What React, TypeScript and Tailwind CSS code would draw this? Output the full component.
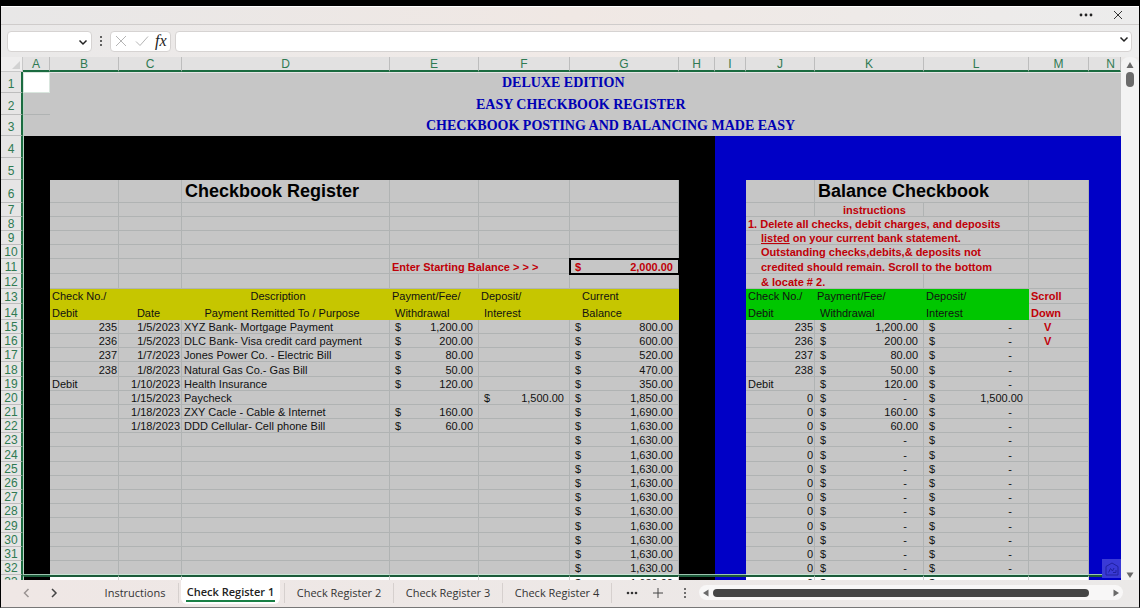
import type { ReactNode } from "react";

const GRID = "border-r border-b border-[#b0b3b3] bg-[#c6c6c6]";
const YELLOW = "bg-[#c6c600]";
const GREEN = "bg-[#00c600]";
const RED = "font-bold text-[#c00008]";

const COLUMNS = [
  { name: "A", width: "w-[27px]" },
  { name: "B", width: "w-[69px]" },
  { name: "C", width: "w-[63px]" },
  { name: "D", width: "" },
  { name: "E", width: "w-[89px]" },
  { name: "F", width: "w-[91px]" },
  { name: "G", width: "w-[109px]" },
  { name: "H", width: "w-[36px]" },
  { name: "I", width: "w-[31px]" },
  { name: "J", width: "w-[69px]" },
  { name: "K", width: "w-[109px]" },
  { name: "L", width: "w-[105px]" },
  { name: "M", width: "w-[60px]" },
  { name: "N", width: "w-[32px]" },
];

type Entry = {
  row: number;
  check?: string;
  date?: string;
  text?: string;
  payment?: string;
  deposit?: string;
  balance: string;
};

const ENTRIES: Entry[] = [
  { row: 15, check: "235", date: "1/5/2023", text: "XYZ Bank- Mortgage Payment", payment: "1,200.00", balance: "800.00" },
  { row: 16, check: "236", date: "1/5/2023", text: "DLC Bank- Visa credit card payment", payment: "200.00", balance: "600.00" },
  { row: 17, check: "237", date: "1/7/2023", text: "Jones Power Co. - Electric Bill", payment: "80.00", balance: "520.00" },
  { row: 18, check: "238", date: "1/8/2023", text: "Natural Gas Co.- Gas Bill", payment: "50.00", balance: "470.00" },
  { row: 19, check: "Debit", date: "1/10/2023", text: "Health Insurance", payment: "120.00", balance: "350.00" },
  { row: 20, date: "1/15/2023", text: "Paycheck", deposit: "1,500.00", balance: "1,850.00" },
  { row: 21, date: "1/18/2023", text: "ZXY Cacle - Cable & Internet", payment: "160.00", balance: "1,690.00" },
  { row: 22, date: "1/18/2023", text: "DDD Cellular- Cell phone Bill", payment: "60.00", balance: "1,630.00" },
  ...Array.from({ length: 11 }, (_, i) => ({ row: 23 + i, balance: "1,630.00" })),
];

const TALL_ROWS = [18, 24, 29];

function Cell({ span, className = "", children }: { span?: number; className?: string; children?: ReactNode }) {
  return (
    <td colSpan={span} className={`p-0 align-bottom whitespace-nowrap ${className}`}>
      {children}
    </td>
  );
}

function Money({ value }: { value?: string }) {
  if (!value) return null;
  return (
    <div className={`flex justify-between pl-[5px] ${value === "-" ? "pr-4" : "pr-[5px]"}`}>
      <span>$</span>
      <span>{value}</span>
    </div>
  );
}

function Row({ n, height, children }: { n: number; height: string; children: ReactNode }) {
  const pad = n <= 6 ? "pb-[2px]" : "";
  return (
    <tr className={height}>
      <th
        scope="row"
        className={`border-r-2 border-b border-r-[#1b6b40] border-b-[#bdbdbd] bg-[#e6e5e5] p-0 align-bottom text-[12px] leading-[12px] font-normal text-[#2f7a52] ${pad}`}
      >
        {n}
      </th>
      {children}
    </tr>
  );
}

const EDGE = "border-l border-[#b9d4c4]";

/* Rows 6 and below share the coloured gutters A, H, I and N. */
function Framed({ n, height, left, right }: { n: number; height: string; left: ReactNode; right: ReactNode }) {
  const line = n === 33 ? "border-t-2 border-t-[#1b5b3a]" : n === 32 ? "border-b border-b-[#9cc4b0]" : "";
  return (
    <Row n={n} height={height}>
      <Cell className={`bg-black ${EDGE} ${line}`} />
      {left}
      <Cell className={`bg-black ${line}`} />
      <Cell className={`bg-[#0000c6] ${line}`} />
      {right}
      <Cell className={`bg-[#0000c6] ${line}`} />
    </Row>
  );
}

function Blank({ count }: { count: number }) {
  return (
    <>
      {Array.from({ length: count }, (_, i) => (
        <Cell key={i} className={GRID} />
      ))}
    </>
  );
}

function Instruction({ children, indent = true }: { children: ReactNode; indent?: boolean }) {
  return (
    <>
      <Cell span={3} className={`${GRID} ${RED} ${indent ? "pl-[15px]" : "pl-[2px]"}`}>
        {children}
      </Cell>
      <Blank count={1} />
    </>
  );
}

function EntryRow({ e }: { e: Entry }) {
  const last = e.row === 33;
  const edge = e.row === 32 ? "border-r border-b border-r-[#b0b3b3] border-b-[#c9e6d6] bg-[#c6c6c6]" : GRID;
  const box = last ? "border-t-2 border-r border-t-[#1b5b3a] border-r-[#d4d4d4] bg-white" : edge;
  const check = e.check ?? "";
  const mirror = e.check ?? "0";
  return (
    <Framed
      n={e.row}
      height={TALL_ROWS.includes(e.row) ? "h-[15px]" : "h-[14px]"}
      left={
        <>
          <Cell className={`${box} ${check === "Debit" ? "pl-[2px]" : "pr-px text-right"}`}>{check}</Cell>
          <Cell className={`${box} pr-px text-right`}>{e.date}</Cell>
          <Cell className={`${box} pl-[2px]`}>{e.text}</Cell>
          <Cell className={box}><Money value={e.payment} /></Cell>
          <Cell className={box}><Money value={e.deposit} /></Cell>
          <Cell className={box}><Money value={e.balance} /></Cell>
        </>
      }
      right={
        <>
          <Cell className={`${box} ${mirror === "Debit" ? "pl-[2px]" : "pr-px text-right"}`}>{mirror}</Cell>
          <Cell className={box}><Money value={e.payment ?? "-"} /></Cell>
          <Cell className={box}><Money value={e.deposit ?? "-"} /></Cell>
          <Cell className={`${box} ${RED} pl-[15px]`}>{e.row === 15 || e.row === 16 ? "V" : ""}</Cell>
        </>
      }
    />
  );
}

const TITLE = "bg-[#c6c6c6] pb-px font-['Liberation_Serif',serif] text-[14px] leading-[18px] font-bold text-[#0000b4]";

function Sheet() {
  return (
    <table className="w-full table-fixed border-separate border-spacing-0 font-['Liberation_Sans',Arial,sans-serif] text-[11px] leading-[12px] text-[#111111]">
      <colgroup>
        <col className="w-[22px]" />
        {COLUMNS.map((c) => (
          <col key={c.name} className={c.width} />
        ))}
      </colgroup>
      <thead>
        <tr className="h-[15px] bg-[#e2e1e1] text-[12px] leading-[12px] text-[#2f7a52]">
          <td className="border-r border-b border-[#c8c8c8] bg-[#efeeee] p-0">
            <svg viewBox="0 0 20 12" className="ml-auto block h-3 w-5" aria-hidden="true">
              <path d="M18 3v8h-8z" fill="#d2d2d2" />
            </svg>
          </td>
          {COLUMNS.map((c) => (
            <th
              key={c.name}
              scope="col"
              className={`border-r border-b-2 border-r-[#bdbdbd] border-b-[#1b6b40] p-0 pt-px align-bottom font-normal ${c.name === "N" ? "pl-3" : ""}`}
            >
              {c.name}
            </th>
          ))}
        </tr>
      </thead>
      <tbody>
        <Row n={1} height="h-[21px]">
          <Cell className="border border-[#d9e6de] bg-white" />
          <Cell span={3} className="border-t border-[#e6e6e6] bg-[#c6c6c6]" />
          <Cell span={10} className={`border-t border-[#e6e6e6] pl-28 ${TITLE}`}>DELUXE EDITION</Cell>
        </Row>
        <Row n={2} height="h-[22px]">
          <Cell className={`border-b bg-[#c6c6c6] ${EDGE} border-b-[#b0b3b3]`} />
          <Cell span={3} className="bg-[#c6c6c6]" />
          <Cell span={10} className={`pl-[86px] ${TITLE}`}>EASY CHECKBOOK REGISTER</Cell>
        </Row>
        <Row n={3} height="h-[21px]">
          <Cell className={`bg-[#c6c6c6] ${EDGE}`} />
          <Cell span={3} className="bg-[#c6c6c6]" />
          <Cell span={10} className={`pl-9 ${TITLE}`}>CHECKBOOK POSTING AND BALANCING MADE EASY</Cell>
        </Row>
        {[4, 5].map((n) => (
          <Row key={n} n={n} height="h-[22px]">
            <Cell span={8} className={`bg-black ${EDGE}`} />
            <Cell span={6} className="bg-[#0000c6]" />
          </Row>
        ))}
        <Framed
          n={6}
          height="h-[23px]"
          left={
            <>
              <Blank count={2} />
              <Cell className={`${GRID} pl-[3px] text-[18px] leading-[21px] font-bold text-black`}>Checkbook Register</Cell>
              <Blank count={3} />
            </>
          }
          right={
            <>
              <Blank count={1} />
              <Cell span={2} className={`${GRID} pl-[3px] text-[18px] leading-[21px] font-bold text-black`}>Balance Checkbook</Cell>
              <Blank count={1} />
            </>
          }
        />
        <Framed
          n={7}
          height="h-[14px]"
          left={<Blank count={6} />}
          right={
            <>
              <Blank count={1} />
              <Cell className={`${GRID} ${RED} pl-7`}>instructions</Cell>
              <Blank count={2} />
            </>
          }
        />
        <Framed
          n={8}
          height="h-[14px]"
          left={<Blank count={6} />}
          right={<Instruction indent={false}>1. Delete all checks, debit charges, and deposits</Instruction>}
        />
        <Framed
          n={9}
          height="h-[14px]"
          left={<Blank count={6} />}
          right={<Instruction><span className="underline">listed</span> on your current bank statement.</Instruction>}
        />
        <Framed
          n={10}
          height="h-[14px]"
          left={<Blank count={6} />}
          right={<Instruction>Outstanding checks,debits,&amp; deposits not</Instruction>}
        />
        <Framed
          n={11}
          height="h-[15px]"
          left={
            <>
              <Blank count={3} />
              <Cell span={2} className={`${GRID} ${RED} pl-[2px]`}>Enter Starting Balance &gt; &gt; &gt;</Cell>
              <Cell className={`${GRID} ${RED} outline-2 -outline-offset-1 outline-black`}><Money value="2,000.00" /></Cell>
            </>
          }
          right={<Instruction>credited should remain. Scroll to the bottom</Instruction>}
        />
        <Framed
          n={12}
          height="h-[15px]"
          left={<Blank count={6} />}
          right={
            <>
              <Cell span={2} className={`${GRID} ${RED} pl-[15px]`}>&amp; locate # 2.</Cell>
              <Blank count={2} />
            </>
          }
        />
        <Framed
          n={13}
          height="h-[15px]"
          left={
            <>
              <Cell className={`${YELLOW} pb-[2px] pl-[2px]`}>Check No./</Cell>
              <Cell className={YELLOW} />
              <Cell className={`${YELLOW} pr-4 pb-[2px] text-center`}>Description</Cell>
              <Cell className={`${YELLOW} pb-[2px] pl-[2px]`}>Payment/Fee/</Cell>
              <Cell className={`${YELLOW} pb-[2px] pl-[2px]`}>Deposit/</Cell>
              <Cell className={`${YELLOW} pb-[2px] pl-3`}>Current</Cell>
            </>
          }
          right={
            <>
              <Cell className={`${GREEN} pb-[2px] pl-[2px]`}>Check No./</Cell>
              <Cell className={`${GREEN} pb-[2px] pl-[2px]`}>Payment/Fee/</Cell>
              <Cell className={`${GREEN} pb-[2px] pl-[2px]`}>Deposit/</Cell>
              <Cell className={`${GRID} ${RED} pb-px pl-[2px]`}>Scroll</Cell>
            </>
          }
        />
        <Framed
          n={14}
          height="h-[16px]"
          left={
            <>
              <Cell className={`${YELLOW} pb-px pl-[2px]`}>Debit</Cell>
              <Cell className={`${YELLOW} pr-1 pb-px text-center`}>Date</Cell>
              <Cell className={`${YELLOW} pr-2 pb-px text-center`}>Payment Remitted To / Purpose</Cell>
              <Cell className={`${YELLOW} pb-px pl-[5px]`}>Withdrawal</Cell>
              <Cell className={`${YELLOW} pb-px pl-[5px]`}>Interest</Cell>
              <Cell className={`${YELLOW} pb-px pl-3`}>Balance</Cell>
            </>
          }
          right={
            <>
              <Cell className={`${GREEN} pb-px pl-[2px]`}>Debit</Cell>
              <Cell className={`${GREEN} pb-px pl-[5px]`}>Withdrawal</Cell>
              <Cell className={`${GREEN} pb-px pl-[2px]`}>Interest</Cell>
              <Cell className={`${GRID} ${RED} pl-[2px]`}>Down</Cell>
            </>
          }
        />
        {ENTRIES.map((e) => (
          <EntryRow key={e.row} e={e} />
        ))}
      </tbody>
    </table>
  );
}

function Arrow({ d }: { d: string }) {
  return (
    <svg viewBox="0 0 8 8" className="size-2 shrink-0" aria-hidden="true">
      <path d={d} fill="#6a6a6a" />
    </svg>
  );
}

function Chevron({ d, stroke = "#222222" }: { d: string; stroke?: string }) {
  return (
    <svg viewBox="0 0 10 10" className="size-2.5" fill="none" stroke={stroke} strokeWidth="1.5" aria-hidden="true">
      <path d={d} />
    </svg>
  );
}

function FormulaBar() {
  return (
    <div className="flex h-8 shrink-0 items-center bg-linear-to-r from-[#eae9e9] via-[#f1eae7] to-[#ededed] pr-[7px] pl-1.5">
      <div className="flex h-[21px] w-[85px] items-center rounded border border-[#d6d3d2] bg-white pr-[3px]">
        <input aria-label="Name box" className="h-full min-w-0 flex-1 bg-transparent px-1 text-[11px] outline-none" />
        <button type="button" aria-label="Open names" className="pt-px">
          <Chevron d="M1.500 3.500l3.500 3.500 3.500-3.500" />
        </button>
      </div>
      <svg viewBox="0 0 4 12" className="mx-[7px] h-3 w-1" fill="#333333" aria-hidden="true">
        <circle cx="2" cy="2" r="1" />
        <circle cx="2" cy="6" r="1" />
        <circle cx="2" cy="10" r="1" />
      </svg>
      <div className="flex h-[21px] w-[61px] items-center rounded border border-[#d6d3d2] bg-white pl-1">
        <button type="button" aria-label="Cancel" className="w-5">
          <svg viewBox="0 0 12 12" className="size-3" stroke="#b5b5b5" fill="none" aria-hidden="true">
            <path d="M1 1l10 10M11 1L1 11" />
          </svg>
        </button>
        <button type="button" aria-label="Enter" className="w-5">
          <svg viewBox="0 0 14 12" className="h-3 w-3.5" stroke="#b5b5b5" fill="none" aria-hidden="true">
            <path d="M1 6.500l4 4L13 1.500" />
          </svg>
        </button>
        <button type="button" className="font-['Liberation_Serif',serif] text-[16px] leading-4 text-[#222222] italic">
          fx
        </button>
      </div>
      <div className="ml-1 flex h-[21px] min-w-0 flex-1 items-center rounded border border-[#d6d3d2] bg-white pr-[2px]">
        <input aria-label="Formula" className="h-full min-w-0 flex-1 bg-transparent px-1 text-[11px] outline-none" />
        <button type="button" aria-label="Expand formula bar" className="pb-1">
          <Chevron d="M1.500 3.500l3.500 3.500 3.500-3.500" />
        </button>
      </div>
    </div>
  );
}

function SheetTabs() {
  const tab = "h-5 w-[109px] shrink-0 border-r border-[#d6d0ce] text-center";
  return (
    <div className="flex h-[27px] shrink-0 items-center bg-linear-to-r from-[#efe7e5] to-[#ebe9e8] pb-[2px] font-['Open_Sans',sans-serif] text-[11px] leading-5 text-[#333333]">
      <button type="button" aria-label="Previous sheet" className="ml-[21px]">
        <Chevron d="M6.500 1l-4 4 4 4" stroke="#9a9493" />
      </button>
      <button type="button" aria-label="Next sheet" className="ml-[17px]">
        <Chevron d="M3 1l4 4-4 4" stroke="#444444" />
      </button>
      <button type="button" className="ml-[33px] h-5 w-[87px] shrink-0 border-r border-[#d6d0ce] text-center">Instructions</button>
      <button
        type="button"
        aria-current="page"
        className="ml-[2px] h-6 w-[99px] shrink-0 self-start rounded-b-md bg-white px-[5px] font-semibold text-[#222222]"
      >
        <span className="block border-b-2 border-[#1a7f45] leading-[17px] whitespace-nowrap">Check Register 1</span>
      </button>
      <span className="h-5 w-[5px] border-r border-[#d6d0ce]" />
      <button type="button" className={tab}>Check Register 2</button>
      <button type="button" className={tab}>Check Register 3</button>
      <button type="button" className={tab}>Check Register 4</button>
      <button type="button" aria-label="More sheets" className="ml-3.5">
        <svg viewBox="0 0 12 4" className="h-1 w-3" fill="#333333" aria-hidden="true">
          <circle cx="2" cy="2" r="1.300" />
          <circle cx="6" cy="2" r="1.300" />
          <circle cx="10" cy="2" r="1.300" />
        </svg>
      </button>
      <button type="button" aria-label="Add sheet" className="ml-[15px]">
        <svg viewBox="0 0 10 10" className="size-2.5" stroke="#444444" fill="none" aria-hidden="true">
          <path d="M5 0v10M0 5h10" />
        </svg>
      </button>
      <svg viewBox="0 0 4 12" className="ml-5 h-3 w-1 shrink-0" fill="#444444" aria-hidden="true">
        <circle cx="2" cy="2" r="1" />
        <circle cx="2" cy="6" r="1" />
        <circle cx="2" cy="10" r="1" />
      </svg>
      <div className="mr-4 ml-3 flex h-[15px] min-w-0 flex-1 items-center rounded-full bg-[#f8f7f7] px-[3px]">
        <Arrow d="M6.500 0.500v7L1 4z" />
        <div className="ml-[3px] flex min-w-0 flex-1 pr-[23px]">
          <div className="h-2 flex-1 rounded-full bg-[#454545]" />
        </div>
        <Arrow d="M1.500 0.500v7L7 4z" />
      </div>
    </div>
  );
}

export default function App() {
  return (
    <div className="flex h-screen flex-col overflow-hidden border-t-[6px] border-r border-b border-l border-t-black border-r-black border-b-[#777777] border-l-black bg-[#ebe9e8]">
      <div className="flex h-[19px] shrink-0 items-center justify-end gap-5 border-t border-b border-t-white border-b-[#cfcccb] bg-linear-to-r from-[#e8e7e7] via-[#f0e8e4] to-[#ececec] pr-4 pb-px">
        <button type="button" aria-label="More options">
          <svg viewBox="0 0 14 4" className="h-1 w-3.5" fill="#222222" aria-hidden="true">
            <circle cx="2" cy="2" r="1.400" />
            <circle cx="7" cy="2" r="1.400" />
            <circle cx="12" cy="2" r="1.400" />
          </svg>
        </button>
        <button type="button" aria-label="Close">
          <svg viewBox="0 0 10 10" className="size-2.5" stroke="#333333" fill="none" aria-hidden="true">
            <path d="M1 1l8 8M9 1L1 9" />
          </svg>
        </button>
      </div>
      <FormulaBar />
      <div className="flex min-h-0 flex-1">
        <div className="relative min-w-0 flex-1 overflow-hidden">
          <Sheet />
          <button
            type="button"
            aria-label="Quick analysis"
            className="absolute right-0 bottom-0.5 flex size-[19px] items-center justify-center bg-[#3a3ad6]"
          >
            <svg viewBox="0 0 14 14" className="size-3.5" fill="none" stroke="#2020a0" aria-hidden="true">
              <path d="M1 4.500L7 1l6 3.500V13H1zM3.500 10.500l2-4 2 2.500 1.500-3M8 10.500h3V8" />
            </svg>
          </button>
        </div>
        <div className="flex w-[18px] shrink-0 flex-col items-center rounded-t-lg bg-[#f3f3f3] pt-1 pb-px">
          <Arrow d="M0.500 7L4 1l3.500 6z" />
          <div className="mt-[3px] h-[15px] w-2 rounded-full bg-[#6b6b6b]" />
          <div className="flex-1" />
          <Arrow d="M0.500 1.500L4 7l3.500-5.500z" />
        </div>
      </div>
      <SheetTabs />
    </div>
  );
}
